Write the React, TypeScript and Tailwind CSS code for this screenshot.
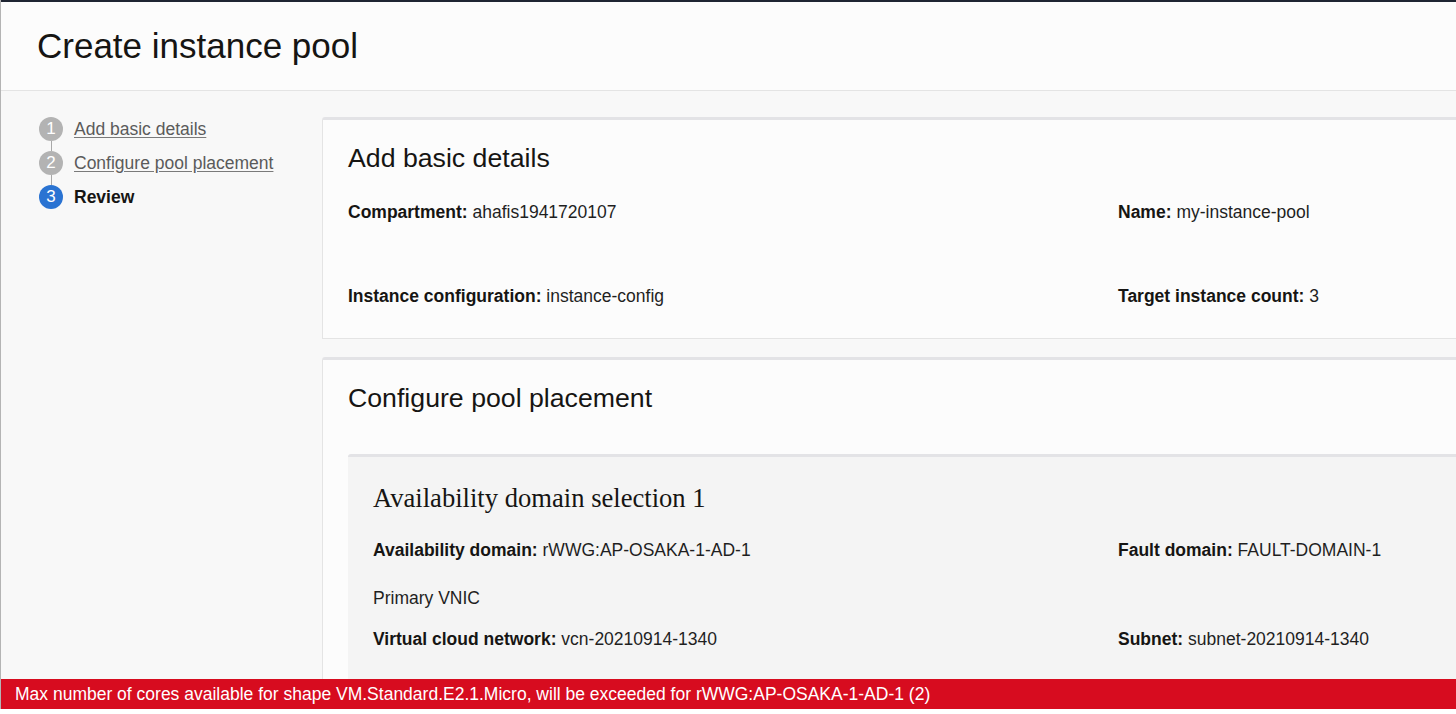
import React from 'react';

const steps = [
  { n: 1, label: 'Add basic details', done: true },
  { n: 2, label: 'Configure pool placement', done: true },
  { n: 3, label: 'Review', done: false },
];

function Field({ label, value }: { label: string; value: string }) {
  return (
    <div className="text-[17.5px] leading-[20px] text-[#1f1f1f] whitespace-nowrap">
      <span className="font-bold text-[#161513]">{label}:</span> {value}
    </div>
  );
}

function Card({ title, children }: { title: string; children: React.ReactNode }) {
  return (
    <section className="w-[1591px] shrink-0 bg-[#fcfcfc] border-t-[3px] border-t-[#e3e3e6] border-l border-l-[#e4e4e4] border-b border-b-[#e4e4e4] rounded-tl-[3px] pl-[25px] pr-[25px] pt-[23px]">
      <h2 className="text-[26.7px] leading-[30px] text-[#161513]">{title}</h2>
      {children}
    </section>
  );
}

export default function App() {
  return (
    <div className="h-[714px] w-full bg-white overflow-hidden font-['Liberation_Sans',Arial,sans-serif]">
      <div className="relative h-[709px] overflow-hidden bg-[#f8f8f8] border-l border-[#b4b4b4]">
        <div className="h-[2px] bg-[#1f2532]" />
        <header className="h-[89px] flex items-center px-[36px] bg-[#fcfcfc] border-b border-[#e4e4e4]">
          <h1 className="text-[35px] leading-[40px] text-[#161513]">Create instance pool</h1>
        </header>

        <div className="flex pt-[26px]">
          <nav className="w-[321px] shrink-0 pl-[38px]">
            {steps.map((s, i) => (
              <div key={s.n}>
                {i > 0 && <div className="w-px h-[10px] ml-[11.5px] bg-[#a8a8a8]" />}
                <div className="flex items-center gap-[11px] h-[24px]">
                  <span
                    className={
                      s.done
                        ? 'w-[24px] h-[24px] rounded-full bg-[#b3b3b3] text-white text-[17px] flex items-center justify-center'
                        : 'w-[24px] h-[24px] rounded-full bg-[#2a73d2] text-white text-[17px] flex items-center justify-center'
                    }
                  >
                    {s.n}
                  </span>
                  {s.done ? (
                    <a className="text-[17.5px] text-[#5b5b5b] underline underline-offset-[2px] decoration-[#7a7a7a] whitespace-nowrap">
                      {s.label}
                    </a>
                  ) : (
                    <span className="text-[17.5px] font-bold text-[#161513]">{s.label}</span>
                  )}
                </div>
              </div>
            ))}
          </nav>

          <main className="flex-1 min-w-0 flex flex-col gap-[18px]">
            <Card title="Add basic details">
              <div className="grid grid-cols-[770px_770px] gap-y-[64px] mt-[29px] pb-[32px]">
                <Field label="Compartment" value="ahafis1941720107" />
                <Field label="Name" value="my-instance-pool" />
                <Field label="Instance configuration" value="instance-config" />
                <Field label="Target instance count" value="3" />
              </div>
            </Card>

            <Card title="Configure pool placement">
              <div className="mt-[41px] bg-[#f4f4f4] border-t-[3px] border-[#e3e3e6] rounded-tl-[3px] px-[25px] pt-[26px] pb-[40px]">
                <h3 className="font-['Liberation_Serif','Times_New_Roman',serif] text-[26.6px] leading-[30px] text-[#161513]">
                  Availability domain selection 1
                </h3>
                <div className="grid grid-cols-[745px_745px] mt-[27px]">
                  <Field label="Availability domain" value="rWWG:AP-OSAKA-1-AD-1" />
                  <Field label="Fault domain" value="FAULT-DOMAIN-1" />
                </div>
                <div className="mt-[28px] text-[17.5px] leading-[20px] text-[#1f1f1f]">Primary VNIC</div>
                <div className="grid grid-cols-[745px_745px] mt-[21px]">
                  <Field label="Virtual cloud network" value="vcn-20210914-1340" />
                  <Field label="Subnet" value="subnet-20210914-1340" />
                </div>
              </div>
            </Card>
          </main>
        </div>

        <div className="absolute left-0 right-0 bottom-0 h-[30px] bg-[#d70c1f] flex items-center px-[14px] text-white text-[17.5px] whitespace-nowrap">
          Max number of cores available for shape VM.Standard.E2.1.Micro, will be exceeded for rWWG:AP-OSAKA-1-AD-1 (2)
        </div>
      </div>
    </div>
  );
}
